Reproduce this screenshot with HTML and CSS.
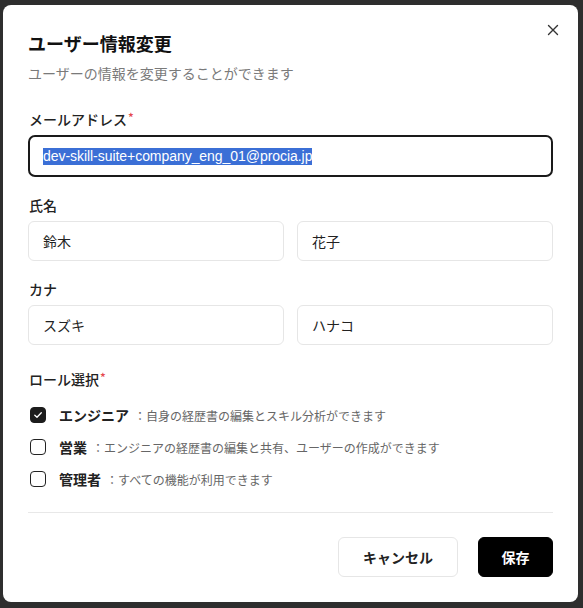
FILE: index.html
```html
<!DOCTYPE html>
<html lang="ja">
<head>
<meta charset="utf-8">
<title>ユーザー情報変更</title>
<link rel="stylesheet" href="styles.css">
</head>
<body>
<div class="overlay">
  <div class="modal">
    <button class="close" aria-label="閉じる">
      <svg width="12" height="12" viewBox="0 0 12 12"><path d="M1.5 1.5 L10.5 10.5 M10.5 1.5 L1.5 10.5" stroke="#333" stroke-width="1.4" stroke-linecap="round" fill="none"/></svg>
    </button>
    <div class="header">
      <h2 class="title">ユーザー情報変更</h2>
      <p class="subtitle">ユーザーの情報を変更することができます</p>
    </div>

    <div class="field">
      <label class="label">メールアドレス<span class="req">*</span></label>
      <div class="input input-focus"><span class="sel">dev-skill-suite+company_eng_01@procia.jp</span></div>
    </div>

    <div class="field">
      <label class="label">氏名</label>
      <div class="row">
        <div class="input">鈴木</div>
        <div class="input">花子</div>
      </div>
    </div>

    <div class="field">
      <label class="label">カナ</label>
      <div class="row">
        <div class="input">スズキ</div>
        <div class="input">ハナコ</div>
      </div>
    </div>

    <div class="roles">
      <label class="label">ロール選択<span class="req">*</span></label>
      <div class="role-list">
        <div class="role">
          <span class="cb checked">
            <svg width="10" height="10" viewBox="0 0 10 10"><path d="M1.8 5.2 L4 7.3 L8.3 2.8" stroke="#fff" stroke-width="1.3" fill="none" stroke-linecap="round" stroke-linejoin="round"/></svg>
          </span>
          <span class="role-name">エンジニア</span>
          <span class="role-desc">：自身の経歴書の編集とスキル分析ができます</span>
        </div>
        <div class="role">
          <span class="cb"></span>
          <span class="role-name">営業</span>
          <span class="role-desc">：エンジニアの経歴書の編集と共有、ユーザーの作成ができます</span>
        </div>
        <div class="role">
          <span class="cb"></span>
          <span class="role-name">管理者</span>
          <span class="role-desc">：すべての機能が利用できます</span>
        </div>
      </div>
    </div>

    <div class="footer">
      <button class="btn btn-cancel">キャンセル</button>
      <button class="btn btn-save">保存</button>
    </div>
  </div>
</div>
</body>
</html>
```

FILE: styles.css
```css
* { box-sizing: border-box; }
html, body { margin: 0; padding: 0; }
body {
  background: #2e2e2e;
  font-family: "Noto Sans CJK JP", "Noto Sans", sans-serif;
  color: #1f1f1f;
  width: 583px;
  height: 608px;
  overflow: hidden;
}
.overlay {
  padding: 5px 5px 0 3px;
}
.modal {
  position: relative;
  width: 575px;
  height: 597px;
  background: #fff;
  border-radius: 8px;
  padding: 24px 25px 24px 25px;
  display: flex;
  flex-direction: column;
}
.close {
  position: absolute;
  top: 19px;
  right: 19px;
  width: 12px;
  height: 12px;
  padding: 0;
  border: 0;
  background: none;
  display: flex;
}
.header { display: flex; flex-direction: column; gap: 6px; margin-bottom: 26px; }
.title {
  margin: 0;
  font-size: 18px;
  line-height: 28px;
  font-weight: 700;
  color: #111;
}
.subtitle {
  margin: 0;
  font-size: 14px;
  line-height: 20px;
  color: #7a7a7a;
}
.field { display: flex; flex-direction: column; gap: 6px; margin-bottom: 18px; }
.label {
  display: block;
  height: 20px;
  font-size: 14px;
  line-height: 20px;
  font-weight: 500;
  color: #222;
  padding-left: 1px;
}
.req { color: #e5484d; font-size: 12px; line-height: 0; vertical-align: 3px; margin-left: 1px; }
.row { display: grid; grid-template-columns: 1fr 1fr; gap: 13px; }
.input {
  height: 40px;
  border: 1px solid #e6e6e6;
  border-radius: 6px;
  padding: 0 14px;
  display: flex;
  align-items: center;
  font-size: 14px;
  color: #222;
}
.input-focus {
  height: 42px;
  border: 2px solid #1a1a1a;
  border-radius: 7px;
  padding: 0 13px;
  font-family: "Liberation Sans", Arial, sans-serif;
}
.sel {
  background: #3b6fd6;
  color: #fff;
  line-height: 17px;
  letter-spacing: -0.05px;
}
.roles { display: flex; flex-direction: column; gap: 16px; margin-top: 6px; }
.role-list { display: flex; flex-direction: column; gap: 12px; }
.role {
  display: flex;
  align-items: center;
  height: 20px;
  padding-left: 2px;
}
.cb {
  width: 16px;
  height: 16px;
  border: 1.5px solid #222;
  border-radius: 4px;
  margin-right: 13px;
  display: flex;
  align-items: center;
  justify-content: center;
  flex: none;
}
.cb.checked { background: #1c1c1c; border-color: #1c1c1c; }
.role-name {
  font-size: 14px;
  font-weight: 700;
  color: #222;
  margin-right: 5px;
}
.role-desc {
  font-size: 12px;
  color: #666;
}
.footer {
  margin-top: 23px;
  border-top: 1px solid #e8e8e8;
  padding-top: 24px;
  display: flex;
  justify-content: flex-end;
  gap: 20px;
}
.btn {
  height: 40px;
  border-radius: 6px;
  font-family: "Noto Sans CJK JP", "Noto Sans", sans-serif;
  font-size: 14px;
  font-weight: 700;
  cursor: pointer;
}
.btn-cancel {
  width: 120px;
  background: #fff;
  border: 1px solid #e6e6e6;
  color: #222;
}
.btn-save {
  width: 75px;
  background: #000;
  border: 1px solid #000;
  color: #fff;
}
```
